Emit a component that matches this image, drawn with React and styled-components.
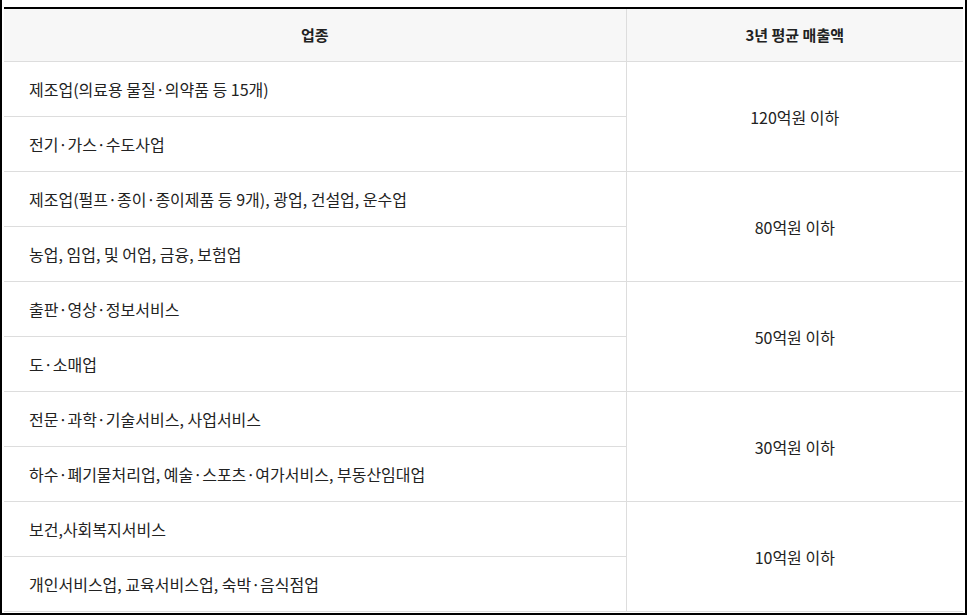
import React from 'react';
import styled, {createGlobalStyle} from 'styled-components';

const GlobalStyle = createGlobalStyle`
    html, body{
        margin: 0;
        padding: 0;
        background: #fff;
    }
    body{
        font-family: "Noto Sans CJK KR", "Noto Sans", sans-serif;
        color: #222;
    }
`

//Data
const groups = [
    {sales: '120억원 이하', items: ['제조업(의료용 물질·의약품 등 15개)', '전기·가스·수도사업']},
    {sales: '80억원 이하', items: ['제조업(펄프·종이·종이제품 등 9개), 광업, 건설업, 운수업', '농업, 임업, 및 어업, 금융, 보험업']},
    {sales: '50억원 이하', items: ['출판·영상·정보서비스', '도·소매업']},
    {sales: '30억원 이하', items: ['전문·과학·기술서비스, 사업서비스', '하수·폐기물처리업, 예술·스포츠·여가서비스, 부동산임대업']},
    {sales: '10억원 이하', items: ['보건,사회복지서비스', '개인서비스업, 교육서비스업, 숙박·음식점업']},
];

const App = () =>{
    return(
        <>
        <GlobalStyle/>
        <Frame>
            <Table>
                <colgroup>
                    <col style={{width: '622px'}}/>
                    <col/>
                </colgroup>
                <thead>
                    <tr>
                        <Head>업종</Head>
                        <Head>3년 평균 매출액</Head>
                    </tr>
                </thead>
                <tbody>
                    {groups.map((group) =>
                        group.items.map((item, i) => (
                            <tr key={item}>
                                <Sector>{item}</Sector>
                                {i === 0 && (
                                    <Sales rowSpan={group.items.length}>{group.sales}</Sales>
                                )}
                            </tr>
                        ))
                    )}
                </tbody>
            </Table>
        </Frame>
        </>
    )
}

const Frame = styled.div`
    width: 961px;
    padding: 7px 0 1px 2px;
    border-left: 2px solid #000;
    border-right: 2px solid #000;
    border-bottom: 2px solid #000;
`

const Table = styled.table`
    width: 959px;
    table-layout: fixed;
    border-collapse: collapse;
    border-top: 2px solid #000;
    font-size: 16px;
    line-height: 20px;
`

const Head = styled.th`
    height: 52px;
    padding: 0;
    background: #f7f7f7;
    font-size: 15px;
    font-weight: 700;
    text-align: center;
    border-bottom: 1px solid #ddd;
    &:first-child{
        border-right: 1px solid #ddd;
    }
`

const Sector = styled.td`
    height: 54px;
    padding: 0 0 0 25px;
    text-align: left;
    border-bottom: 1px solid #ddd;
    border-right: 1px solid #ddd;
    white-space: nowrap;
`

const Sales = styled.td`
    padding: 0;
    text-align: center;
    border-bottom: 1px solid #ddd;
`

export default App;
